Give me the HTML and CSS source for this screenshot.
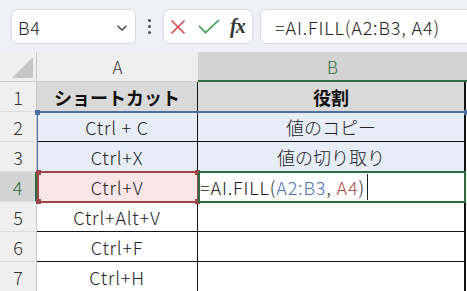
FILE: index.html
```html
<!DOCTYPE html>
<html lang="ja">
<head>
<meta charset="utf-8">
<link rel="stylesheet" href="styles.css">
</head>
<body>
<div class="toolbar">
  <div class="namebox">
    <span class="nb-text">B4</span>
    <svg class="chev" width="12" height="8" viewBox="0 0 12 8"><path d="M1.5 1.8 L6 6 L10.5 1.8" fill="none" stroke="#444" stroke-width="1.3"/></svg>
  </div>
  <div class="dots"><i></i><i></i><i></i></div>
  <div class="funcbox">
    <svg class="ic-x" width="16" height="16" viewBox="0 0 16 16"><path d="M1.5 1.5 L14.5 14.5 M14.5 1.5 L1.5 14.5" stroke="#d24a4a" stroke-width="1.6" fill="none"/></svg>
    <svg class="ic-ok" width="22" height="15" viewBox="0 0 22 15"><path d="M1 7 L7.5 13.5 L21 1" stroke="#3d9a52" stroke-width="1.7" fill="none"/></svg>
    <span class="fx">fx</span>
  </div>
  <div class="formula"><span class="ftext">=AI.FILL(A2:B3, A4)</span></div>
</div>
<div class="sheet">
  <div class="corner"><span class="tri"></span></div>
  <div class="colhead">A</div>
  <div class="colhead sel">B</div>

  <div class="rowhead">1</div>
  <div class="cell hdr">ショートカット</div>
  <div class="cell hdr colb">役割</div>

  <div class="rowhead">2</div>
  <div class="cell blue lat">Ctrl + C</div>
  <div class="cell blue colb">値のコピー</div>

  <div class="rowhead">3</div>
  <div class="cell blue lat">Ctrl+X</div>
  <div class="cell blue colb">値の切り取り</div>

  <div class="rowhead sel">4</div>
  <div class="cell pink lat">Ctrl+V</div>
  <div class="cell edit colb"><span class="etext">=AI.FILL(<span class="ref-b">A2:B3</span>, <span class="ref-r">A4</span>)</span><span class="caret"></span></div>

  <div class="rowhead">5</div>
  <div class="cell lat">Ctrl+Alt+V</div>
  <div class="cell colb"></div>

  <div class="rowhead">6</div>
  <div class="cell lat">Ctrl+F</div>
  <div class="cell colb"></div>

  <div class="rowhead">7</div>
  <div class="cell lat">Ctrl+H</div>
  <div class="cell colb"></div>

  <div class="range range-blue"><i class="h tl"></i><i class="h tr"></i></div>
  <div class="range range-red"><i class="h tl"></i><i class="h tr"></i><i class="h bl"></i><i class="h br"></i></div>
  <div class="range range-green"></div>
</div>
</body>
</html>
```

FILE: styles.css
```css
* { box-sizing: border-box; }
html, body { margin: 0; padding: 0; }
body {
  width: 467px;
  height: 291px;
  overflow: hidden;
  background: #ffffff;
  font-family: "Noto Sans CJK JP", "Noto Sans", sans-serif;
  font-weight: 300;
  color: #1f1f1f;
}
.toolbar {
  height: 52px;
  background: #eef0f3;
  display: flex;
  align-items: flex-start;
  padding: 9px 0 0 11px;
}
.namebox {
  width: 125px;
  height: 35px;
  background: #fff;
  border: 1px solid #d6d9de;
  border-radius: 6px;
  display: flex;
  align-items: center;
  justify-content: space-between;
  padding: 0 7px 0 6px;
}
.nb-text { font-size: 18px; color: #222; letter-spacing: 0.6px; }
.chev { margin-top: 2px; }
.dots {
  width: 27px;
  height: 35px;
  display: flex;
  flex-direction: column;
  align-items: center;
  justify-content: center;
  gap: 3px;
}
.dots i {
  display: block;
  width: 3px;
  height: 3px;
  border-radius: 50%;
  background: #4a4a4a;
}
.funcbox {
  width: 90px;
  height: 35px;
  background: #fff;
  border: 1px solid #d6d9de;
  border-radius: 6px;
  display: flex;
  align-items: center;
  padding-left: 6px;
}
.ic-x { margin-right: 12px; }
.ic-ok { margin-right: 10px; }
.fx {
  font-family: "Liberation Serif", "DejaVu Serif", serif;
  font-style: italic;
  font-weight: bold;
  font-size: 20px;
  color: #333;
  letter-spacing: -1px;
}
.formula {
  flex: 1;
  height: 35px;
  margin-left: 7px;
  margin-right: -12px;
  background: #fff;
  border: 1px solid #d6d9de;
  border-radius: 6px;
  padding-left: 14px;
  display: flex;
  align-items: center;
  font-size: 18px;
  color: #222;
}
.ftext, .etext { letter-spacing: 0.85px; white-space: pre; }
.sheet {
  position: relative;
  display: grid;
  grid-template-columns: 37px 161px 269px;
  grid-auto-rows: 30px;
}
.corner {
  background: #efefef;
  border-right: 1px solid #c9c9c9;
  border-bottom: 1px solid #c9c9c9;
  position: relative;
}
.tri {
  position: absolute;
  right: 3px;
  bottom: 3px;
  width: 0;
  height: 0;
  border-left: 21px solid transparent;
  border-bottom: 21px solid #c6c6c6;
}
.colhead {
  background: #efefef;
  border-bottom: 1px solid #c9c9c9;
  display: flex;
  align-items: center;
  justify-content: center;
  font-size: 17px;
  color: #333;
}
.colhead.sel {
  background: #d3d3d3;
  color: #2d6b40;
  border-bottom: 2px solid #2d6b40;
}
.rowhead {
  background: #efefef;
  border-right: 1px solid #c9c9c9;
  border-bottom: 1px solid #dadada;
  display: flex;
  align-items: center;
  justify-content: center;
  font-size: 18px;
  color: #333;
}
.rowhead.sel {
  background: #d3d3d3;
  color: #2d6b40;
  border-right: 2px solid #2d6b40;
}
.cell {
  border-right: 1px solid #111;
  border-bottom: 1px solid #111;
  display: flex;
  align-items: center;
  justify-content: center;
  font-size: 18px;
  color: #222;
  white-space: pre;
}
.cell.lat { letter-spacing: 0.8px; }
.cell.colb { border-right: 2px solid #111; margin-right: 1px; }
.cell.hdr { background: #d9d9d9; font-weight: bold; color: #111; }
.cell.blue { background: #e7edf7; }
.cell.pink { background: #fae6e6; }
.cell.edit { justify-content: flex-start; padding-left: 2px; background: #fff; }
.ref-b { color: #4d72b5; }
.ref-r { color: #b04848; }
.caret {
  display: inline-block;
  width: 1px;
  height: 26px;
  background: #222;
  margin-left: 2px;
}
.range { position: absolute; pointer-events: none; }
.range-blue {
  left: 37px;
  top: 59px;
  width: 429px;
  height: 61px;
  border-top: 2px solid #4b6fa3;
  border-left: 1px solid #4b6fa3;
}
.range-red {
  left: 37px;
  top: 119px;
  width: 162px;
  height: 32px;
  border: 2px solid #9e4646;
}
.range-green {
  left: 198px;
  top: 119px;
  width: 268px;
  height: 32px;
  border: 2px solid #2d6b40;
}
.h {
  position: absolute;
  width: 5px;
  height: 5px;
}
.range-blue .h { background: #4b6fa3; }
.range-red .h { background: #9e4646; }
.h.tl { left: -3px; top: -3px; }
.h.tr { right: -3px; top: -3px; }
.h.bl { left: -3px; bottom: -3px; }
.h.br { right: -3px; bottom: -3px; }
```
